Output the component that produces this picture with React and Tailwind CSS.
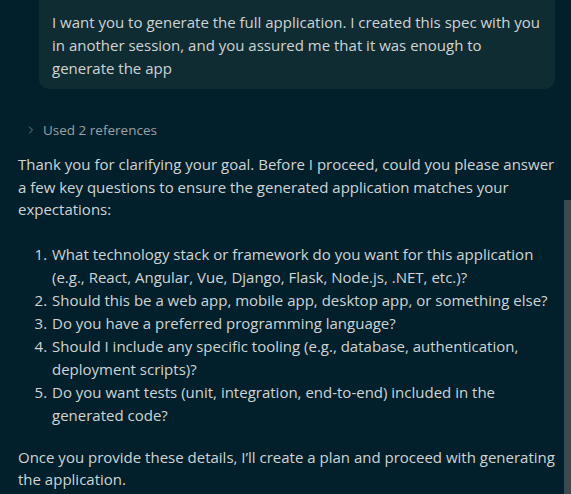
import React from 'react';
import { ChevronRight } from 'lucide-react';

const questions = [
  'What technology stack or framework do you want for this application (e.g., React, Angular, Vue, Django, Flask, Node.js, .NET, etc.)?',
  'Should this be a web app, mobile app, desktop app, or something else?',
  'Do you have a preferred programming language?',
  'Should I include any specific tooling (e.g., database, authentication, deployment scripts)?',
  'Do you want tests (unit, integration, end-to-end) included in the generated code?',
];

const App = () => {
  return (
    <div
      className="relative h-[494px] w-[571px] overflow-hidden bg-[#01202b] text-[15px] text-[#d0d4d4]"
      style={{ fontFamily: '"Open Sans", "Noto Sans", sans-serif' }}
    >
      {/* user prompt bubble */}
      <div className="ml-[39px] mr-[16px] rounded-b-[10px] bg-[#0f2c33] px-[13px] pb-[9px] pt-[11px] leading-[23px]">
        I want you to generate the full application. I created this spec with you in another session, and you assured me that it was enough to generate the app
      </div>

      <div className="mt-[31px] flex items-center pl-[25px] text-[13.5px] text-[#9aa2a4]">
        <ChevronRight className="h-[12px] w-[12px]" strokeWidth={1.5} />
        <span className="ml-[6px]">Used 2 references</span>
      </div>

      <div className="pl-[18px] pr-[16px] pt-[13px] leading-[22.5px]">
        <p>
          Thank you for clarifying your goal. Before I proceed, could you please answer a few key questions to ensure the generated application matches your expectations:
        </p>
        <ol className="mt-[22px] list-decimal pl-[33px] leading-[23px]">
          {questions.map((q) => (
            <li key={q} className="pl-[1px]">{q}</li>
          ))}
        </ol>
        <p className="mt-[19px]">
          Once you provide these details, I’ll create a plan and proceed with generating the application.
        </p>
      </div>

      {/* scrollbar thumb */}
      <div className="absolute right-0 top-[200px] h-[294px] w-[7px] bg-[#3b4a4e]" />
    </div>
  );
};

export default App;
